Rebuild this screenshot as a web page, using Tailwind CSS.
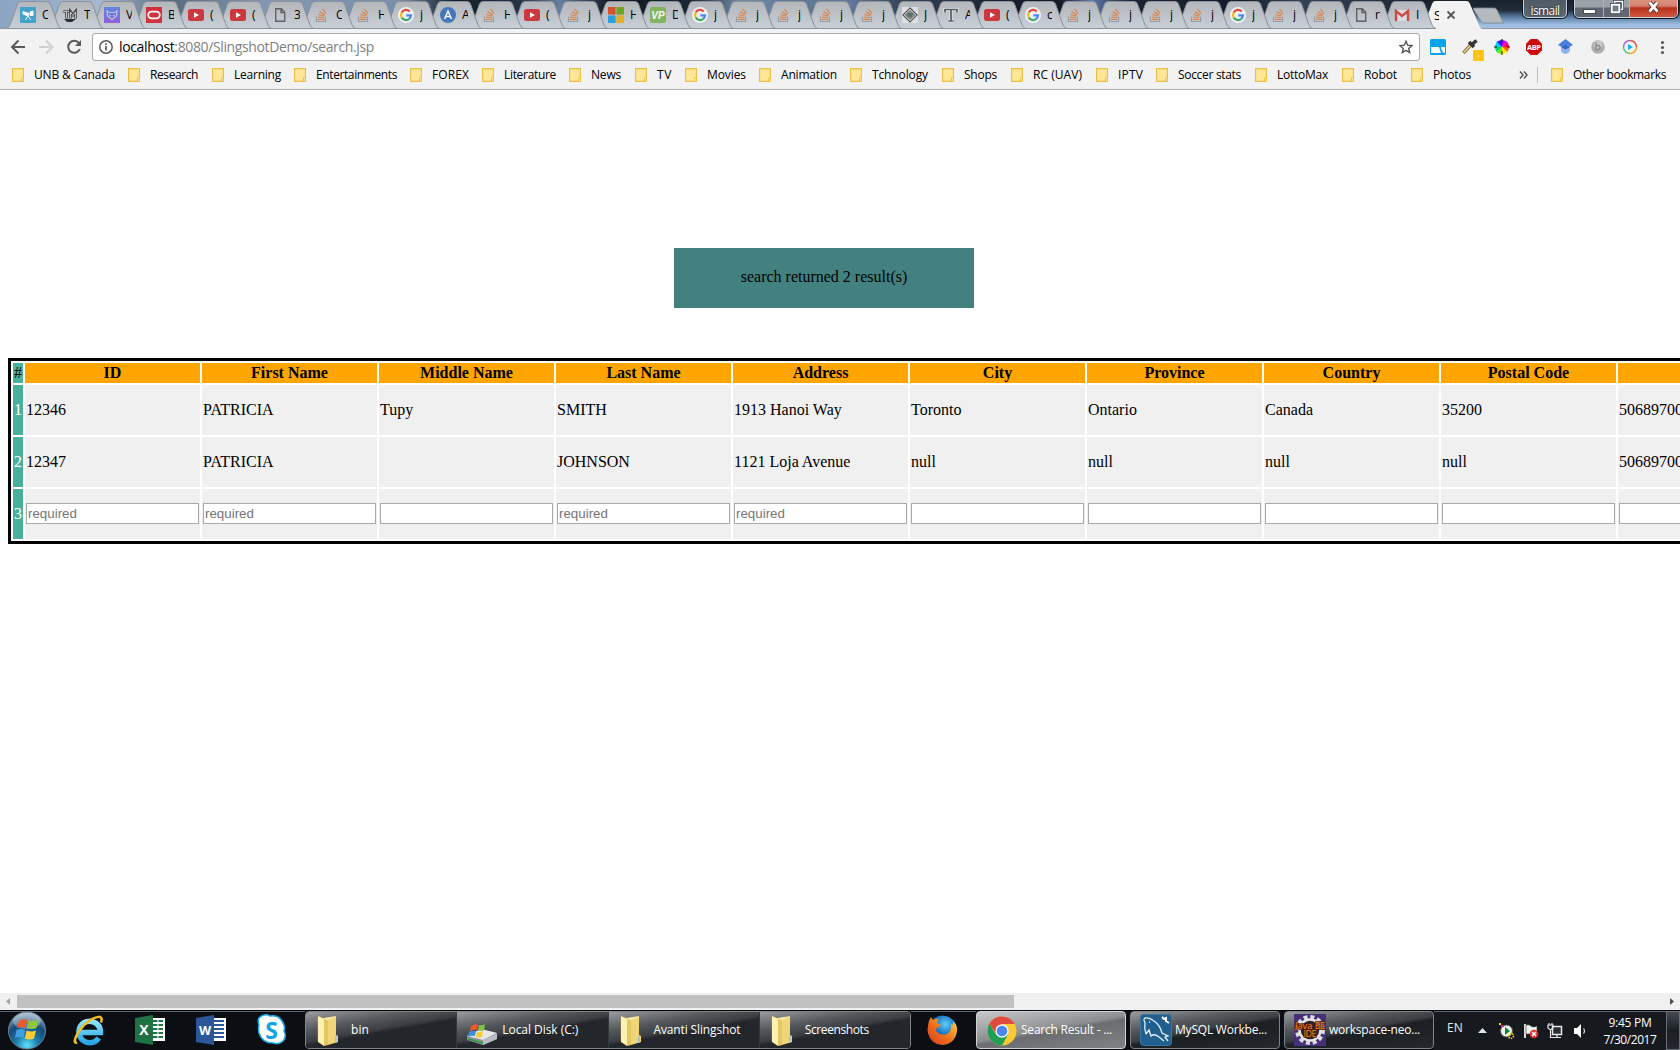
<!DOCTYPE html>
<html lang="en">
<head>
<meta charset="utf-8">
<title>Search Result</title>
<script src="https://cdn.jsdelivr.net/npm/@tailwindcss/browser@4"></script>
</head>
<body class="w-[1680px] h-[1050px] overflow-hidden bg-white flex flex-col font-['Open_Sans',sans-serif] text-xs text-black">

<svg class="absolute w-0 h-0">
  <defs>
    <linearGradient id="tabfill" x1="0" y1="0" x2="0" y2="1"><stop offset="0" stop-color="#b3b5b9"/><stop offset="1" stop-color="#c9d0d8"/></linearGradient>
    <linearGradient id="fold" x1="0" y1="0" x2="1" y2="1"><stop offset="0" stop-color="#fff6c4"/><stop offset="1" stop-color="#e6c558"/></linearGradient>
    <linearGradient id="violet" x1="0" y1="0" x2="0" y2="1"><stop offset="0" stop-color="#5a7fe0"/><stop offset="1" stop-color="#8a58d8"/></linearGradient>
    <radialGradient id="orb" cx=".5" cy=".9" r=".9"><stop offset="0" stop-color="#5fe0f8"/><stop offset=".35" stop-color="#1878a8"/><stop offset=".65" stop-color="#174a75"/><stop offset="1" stop-color="#9db6cc"/></radialGradient>
    <radialGradient id="fox" cx=".6" cy=".3" r=".7"><stop offset="0" stop-color="#5ed0f5"/><stop offset=".5" stop-color="#1574c4"/><stop offset="1" stop-color="#0a2a66"/></radialGradient>
    <linearGradient id="flame" x1="0" y1="1" x2="1" y2="0"><stop offset="0" stop-color="#d9361c"/><stop offset=".5" stop-color="#f0761c"/><stop offset="1" stop-color="#ffe24a"/></linearGradient>
    <linearGradient id="ie" x1="0" y1="0" x2="0" y2="1"><stop offset="0" stop-color="#8fe3ff"/><stop offset="1" stop-color="#2aa5e6"/></linearGradient>
  </defs>
  <symbol id="i-scope" viewBox="0 0 16 16"><rect width="16" height="16" fill="#35a0cb"/><path d="M3 4.500l6 2-1 2.500-5-2zM10 5l3-1v4.500l-3 0zM8 9l-2.500 4M8 9l3 4" fill="#fff" stroke="#fff"/></symbol>
  <symbol id="i-tm" viewBox="0 0 16 16"><path d="M1.500 4.500h6M4.500 4.500v7M8.500 11.500V4.500l2.500 3.500L13.500 4.500v7" fill="none" stroke="#333" stroke-width="2.600"/><path d="M2 4.500h5M4.500 5v6M8.500 11V5l2.500 3.500L13.500 5v6" fill="none" stroke="#fff" stroke-width=".7"/><path d="M2 12h12l-4 3H5z" fill="#222"/></symbol>
  <symbol id="i-mask" viewBox="0 0 16 16"><rect width="16" height="16" fill="url(#violet)"/><path d="M3 4l2.500 1.500h5L13 4l-.5 5L8 12.500 3.500 9z" fill="none" stroke="#b9c5f2" stroke-width="1.200"/><path d="M5 8l2 1M11 8L9 9" stroke="#b9c5f2"/></symbol>
  <symbol id="i-oracle" viewBox="0 0 16 16"><rect width="16" height="16" fill="#d5232e"/><rect x="2.200" y="4.700" width="11.600" height="6.600" rx="3.300" fill="none" stroke="#fff" stroke-width="1.700"/></symbol>
  <symbol id="i-yt" viewBox="0 0 16 16"><rect y="2" width="16" height="12" rx="2.500" fill="#cf2a31"/><path d="M6 5.300l5 2.700-5 2.700z" fill="#fff"/></symbol>
  <symbol id="i-file" viewBox="0 0 16 16"><path d="M3.700 1.700h5.600l3.400 3.600v9H3.700zM9 2v3.500h3.500" fill="none" stroke="#55585d" stroke-width="1.400"/></symbol>
  <symbol id="i-so" viewBox="0 0 16 16"><path d="M2.500 9.500v5h9v-5" fill="none" stroke="#8f9aa8" stroke-width="1.200"/><path d="M4 12.300h6.200M4 10l6.200.5M4.300 7.500l6.200 1.500M5.700 4.700l5.400 3M8.500 2l3.500 4.500" stroke="#e07a35" stroke-width="1.200"/></symbol>
  <symbol id="i-g" viewBox="0 0 16 16"><circle cx="8" cy="8" r="8" fill="#f5f7f9"/><g fill="none" stroke-width="2.300"><path d="M11.700 4.500A5 5 0 0 0 3.700 5.500" stroke="#ea4335"/><path d="M3.700 5.500a5 5 0 0 0 0 5" stroke="#fbbc05"/><path d="M3.700 10.500a5 5 0 0 0 7.500 1.400" stroke="#34a853"/><path d="M11.200 11.900A5 5 0 0 0 13 8.300H8.300" stroke="#4285f4"/></g></symbol>
  <symbol id="i-a" viewBox="0 0 16 16"><circle cx="8" cy="8" r="8" fill="#3a70b8"/><path d="M4.500 12L8 4l3.500 8M5.500 9.500h5" fill="none" stroke="#fff" stroke-width="1.400"/></symbol>
  <symbol id="i-ms" viewBox="0 0 16 16"><path fill="#d8481f" d="M0 0h7.600v7.600H0z"/><path fill="#6ba10f" d="M8.400 0H16v7.600H8.400z"/><path fill="#1a9be0" d="M0 8.400h7.600V16H0z"/><path fill="#e5ae18" d="M8.400 8.400H16V16H8.400z"/></symbol>
  <symbol id="i-vp" viewBox="0 0 16 16"><rect width="16" height="16" rx="2" fill="#7cb254"/><text x="8" y="11.500" font-size="10" font-style="italic" font-weight="700" fill="#fff" text-anchor="middle" font-family="Liberation Sans">VP</text></symbol>
  <symbol id="i-dia" viewBox="0 0 16 16"><rect width="16" height="16" fill="#dfe3e5"/><path d="M8 1l7 7-7 7-7-7z" fill="#fff" stroke="#444" stroke-width="1.200"/><path d="M8 3.500l4.500 4.500L8 12.500 3.500 8z" fill="#7d9b8c" stroke="#444"/><path d="M5 7h6M6 9h4" stroke="#333"/></symbol>
  <symbol id="i-t" viewBox="0 0 16 16"><path d="M2 5.500V2.500h12v3M8 2.500v11M5.500 14h5" fill="none" stroke="#eceef0" stroke-width="3.200"/><path d="M2 5.500V2.500h12v3M8 2.500v11M5.500 14h5" fill="none" stroke="#4a5058" stroke-width="1.700"/></symbol>
  <symbol id="i-gmail" viewBox="0 0 16 16"><rect x="1" y="3" width="14" height="11" fill="#dfe2e6"/><path d="M2 14V4l6 5 6-5v10" fill="none" stroke="#d23c31" stroke-width="2.400"/></symbol>
  <symbol id="i-bm" viewBox="0 0 12 14"><path d="M.6.6h10.800v12.800H.6z" fill="#ffe796" stroke="#e9c04a" stroke-width="1.200"/><path d="M9.500 13.400v-3.600h2v3.600z" fill="#fff0b5" stroke="#e9c04a"/></symbol>
  <symbol id="i-folder" viewBox="0 0 23 32"><path d="M2 2l9 2v26l-9-4z" fill="#f5e08b" stroke="#c7a640" stroke-width=".5"/><path d="M8 3l12-2v20l-9 2z" fill="url(#fold)"/><path d="M2 1l6 3v27l-6-4z" fill="#fff2b0"/><path d="M8 4l4 1v25l-4 1z" fill="#e5c665"/><path d="M12 5l8-2v17l2 1v6l-10 3z" fill="#f0d578"/><path d="M20 21v7" stroke="#9bd" stroke-width="1.500"/></symbol>
</svg>

<!-- window frame and tab strip -->
<header class="relative h-[29px] shrink-0 flex overflow-hidden bg-[linear-gradient(90deg,#8aa4c2_0,#a5b8ce_100px,#596a7e_170px,#8298b2_260px,#7890ad_400px,#141c26_455px,#273444_520px,#64809f_560px,#12161d_610px,#1c2632_690px,#7189a5_740px,#5e7894_800px,#60799a_850px,#37465a_900px,#18202c_1000px,#141a24_1060px,#617cb0_1090px,#1b2530_1130px,#141c28_1240px,#33445a_1300px,#202a36_1400px,#161d27_1500px,#39424e_1680px)]">
  <div class="absolute left-[1420px] top-0 w-[260px] h-[29px] bg-[linear-gradient(180deg,#19212b_0,#202c39_35%,#5d80a6_60%,#9dbde0_85%,#a9c8e6_100%)]"></div>
  <div id="tabs" class="relative flex pl-[6px]"></div>
  <div class="absolute left-0 top-7 w-full h-px bg-[#8e959e]"></div>
  <svg class="absolute left-[1418px] top-0" width="90" height="29"><path d="M1 29Q5 28 6 25L14 4Q15 1 17 1h32q2 0 3 3l9 21q1 4 4 4z" fill="#f2f2f2"/><path d="M29.500 11.500l7 7m0-7l-7 7" stroke="#555" stroke-width="1.800"/><path d="M56 8h20q2 0 3 2l6.500 13H66q-2 0-3-2L55.500 9.500Q55 8 56 8z" fill="#b5babf" stroke="#7f8893" stroke-width=".8"/></svg>
  <span class="absolute left-[1434px] top-[6px] text-[13px] leading-[18px] w-[5px] overflow-hidden">S</span>
  <div class="absolute left-[1523px] -top-1 w-[44px] h-[22px] rounded-[5px] border border-[#c9d3dd] ring-1 ring-[#10161d] bg-linear-to-b from-[#4d5761] to-[#5b6875] text-white text-[12px] leading-[23px] flex justify-center pt-[2px] [text-shadow:0_0_2px_#000]"><span data-w="28" class="whitespace-nowrap">ismail</span></div>
  <div class="absolute left-[1574px] -top-1 w-[104px] h-[22px] rounded-[5px] border border-[#c9d3dd] ring-1 ring-[#10161d] flex overflow-hidden">
    <div class="w-[29px] border-r border-[#aab4be] bg-linear-to-b from-[#9ba1a8] from-50% to-[#5f6872] to-55% flex justify-center items-end pb-[3px]"><div class="w-[13px] h-[5px] bg-white border border-[#444c55]"></div></div>
    <div class="w-[26px] border-r border-[#aab4be] bg-linear-to-b from-[#9ba1a8] from-50% to-[#5f6872] to-55% flex justify-center items-end pb-[3px]"><svg width="14" height="14"><path d="M4.500 1.500h8v8h-8z" fill="none" stroke="#333c46" stroke-width="3"/><path d="M4.500 1.500h8v8h-8z" fill="none" stroke="#fff" stroke-width="1.500"/><path d="M1.500 4.500h8v8h-8z" fill="#737b84" stroke="#333c46" stroke-width="3"/><path d="M1.700 4.700h7.600v7.600H1.700z" fill="none" stroke="#fff" stroke-width="2"/></svg></div>
    <div class="flex-1 bg-[linear-gradient(180deg,#df9888_0,#d7816f_45%,#b8311b_55%,#cf5a42_100%)] flex justify-center items-end pb-[4px]"><svg width="14" height="12"><path d="M2.500 1.500l8 9m0-9l-8 9" stroke="#54302c" stroke-width="4.500"/><path d="M2.500 1.500l8 9m0-9l-8 9" stroke="#fff" stroke-width="2.700"/></svg></div>
  </div>
</header>

<!-- toolbar -->
<div class="h-[33px] shrink-0 bg-[#f2f2f2] flex items-start pt-1">
  <svg width="92" height="28" viewBox="0 0 92 28" fill="none" stroke-width="2"><path d="M25 14H12.500M18.500 7.500L12 14l6.500 6.500" stroke="#5a5a5a"/><path d="M39 14h12.500M46 7.500l6.500 6.500-6.500 6.500" stroke="#d0d0d0"/><path d="M79 10.200A6 6 0 1 0 79.800 16" stroke="#5a5a5a"/><path d="M81 7v6h-6z" fill="#5a5a5a"/></svg>
  <div class="w-[1328px] h-7 rounded-[3px] border border-[#a8a8a8] bg-white flex items-center">
    <svg class="ml-[6px]" width="14" height="14" viewBox="0 0 14 14"><circle cx="7" cy="7" r="6.200" fill="none" stroke="#5a5a5a" stroke-width="1.500"/><path d="M7 6v4.500M7 3.200v1.700" stroke="#5a5a5a" stroke-width="1.700"/></svg>
    <div class="ml-[6px] text-[14px] leading-[26px] whitespace-nowrap text-[#808080]"><span data-w="254"><span class="text-black">localhost</span>:8080/SlingshotDemo/search.jsp</span></div>
    <svg class="ml-auto mr-[6px]" width="14" height="14" viewBox="0 0 14 14"><path d="M7 1.200l1.700 4 4.300.4-3.300 2.800 1 4.200L7 10.400l-3.700 2.200 1-4.200L1 5.600l4.300-.4z" fill="none" stroke="#555" stroke-width="1.400"/></svg>
  </div>
  <svg width="260" height="29" viewBox="1420 33 260 29">
    <rect x="1430" y="39" width="16" height="16" rx="1.500" fill="#06a4ea"/><path d="M1431 47h8l2 6h-10zM1441 47h4v6q-3 0-4-6z" fill="#fff"/>
    <path d="M1463.500 53l8-9" stroke="#8f7a45" stroke-width="3.500"/><path d="M1464 52.500l8-9" stroke="#e5cf8e" stroke-width="1.500"/><path d="M1469 42l5 5M1472 44.500l4.500-4" stroke="#333" stroke-width="3.500"/><rect x="1473" y="50" width="11" height="11" rx="1" fill="#fdc411"/><path d="M1478 56h1" stroke="#fff"/>
    <g transform="translate(1502 47)"><path d="M0 0V-7.500L5.300-5.300z" fill="#c0f"/><path d="M0 0L5.300-5.300 7.500 0z" fill="#f06"/><path d="M0 0h7.500L5.300 5.300z" fill="#f60"/><path d="M0 0l5.300 5.300L0 7.500z" fill="#fe0"/><path d="M0 0v7.500L-5.300 5.300z" fill="#6e0"/><path d="M0 0l-5.300 5.300L-7.500 0z" fill="#0d6"/><path d="M0 0h-7.500l2.200-5.300z" fill="#0cf"/><path d="M0 0l-5.300-5.300L0-7.500z" fill="#22f"/><path d="M0-8v4M0 8V4M8 0H5M-8 0h3" stroke="#222"/></g>
    <path d="M1530.700 39h6.600l4.700 4.700v6.600l-4.700 4.700h-6.600l-4.700-4.700v-6.600z" fill="#cf0a0a"/><text x="1534" y="50" text-anchor="middle" font-size="7.500" font-weight="700" textLength="14" fill="#fff" font-family="Open Sans">ABP</text>
    <path d="M1565.500 39l7.500 6-7.500 4-7.500-4z" fill="#4a7fdd"/><path d="M1561 46.500h9v4q-1 3-4.500 3.500-4-.5-4.500-3.500z" fill="#8fb2ef"/><path d="M1561 47l4.500 2.500 4.500-2.500-4.500-2z" fill="#3469cc"/>
    <circle cx="1598" cy="47" r="6.800" fill="#adadad"/><circle cx="1598" cy="44.500" r="4.500" fill="#c9c9c9"/><path d="M1596 42.500v7h2a2 2 0 0 0 0-4h-2" stroke="#8d8d8d" stroke-width="1.500" fill="none"/>
    <g fill="none" stroke-width="1.500"><path d="M1630 40.500a6.500 6.500 0 0 1 6.500 6.500" stroke="#e5534a"/><path d="M1636.500 47a6.500 6.500 0 0 1-6.500 6.500" stroke="#f3a72b"/><path d="M1630 53.500a6.500 6.500 0 0 1-6.500-6.500" stroke="#60c98a"/><path d="M1623.500 47a6.500 6.500 0 0 1 6.500-6.500" stroke="#b067d8"/></g><path d="M1628 44l5 3-5 3z" fill="#12b5ea"/>
    <g fill="#5a5a5a"><circle cx="1662.500" cy="42.500" r="1.600"/><circle cx="1662.500" cy="47.500" r="1.600"/><circle cx="1662.500" cy="52.500" r="1.600"/></g>
  </svg>
</div>

<!-- bookmarks bar -->
<div class="h-7 shrink-0 bg-[#f2f2f2] border-b border-[#b6b6b6] flex items-center pl-3 pb-px">
  <div id="bookmarks" class="flex"></div>
  <svg class="ml-[21px]" width="10" height="10" viewBox="0 0 10 10"><path d="M1 1.500l3 3.500-3 3.500M5 1.500L8 5 5 8.500" fill="none" stroke="#555" stroke-width="1.500"/></svg>
  <div class="ml-2 w-px h-4 bg-[#bdbdbd]"></div>
  <div class="ml-[13px] flex items-center gap-[10px]"><svg width="12" height="14"><use href="#i-bm"/></svg><span data-w="92" class="whitespace-nowrap">Other bookmarks</span></div>
</div>

<!-- page -->
<main class="h-[903px] shrink-0 overflow-hidden bg-white font-['Liberation_Serif',serif] text-base leading-[18px] pl-2 pt-[158px]">
  <div class="ml-[666px] w-[300px] h-[60px] bg-[#438080] flex items-center justify-center pb-0.5">search returned 2 result(s)</div>
  <div id="grid" class="mt-[50px] w-max border-[3px] border-black p-0.5 grid grid-cols-[10px_repeat(10,175px)] grid-rows-[20px_50px_50px_50px] gap-0.5"></div>
</main>

<!-- horizontal scroll bar -->
<div class="h-[17px] shrink-0 bg-[#f0f0f0] flex items-center">
  <svg width="17" height="17"><path d="M10 5v7L6 8.500z" fill="#a3a3a3"/></svg>
  <div class="w-[997px] h-[13px] bg-[#c1c1c1]"></div>
  <svg class="ml-auto" width="17" height="17"><path d="M7 5v7l4-3.500z" fill="#505050"/></svg>
</div>

<!-- taskbar -->
<footer class="h-10 shrink-0 border-t border-[#05080a] bg-[#0b0f14] flex text-white relative">
  <svg class="shrink-0" width="305" height="39" viewBox="0 1011 305 39">
    <path d="M0 1011.500h305" stroke="#59646c"/>
    <circle cx="27" cy="1030.500" r="18.500" fill="url(#orb)" stroke="#6d8496"/>
    <ellipse cx="27" cy="1021" rx="14" ry="8" fill="#fff" opacity=".3"/>
    <path d="M19 1021q4-3 8-1l-1.500 8q-4-2-8.500 0z" fill="#f0592b"/><path d="M28.500 1020q4 2 10-.5l-2 8.500q-5 2-9.500 0z" fill="#8cc63e"/><path d="M16.500 1030q4-2 8.500 0l-1.500 8q-4-2-8.500 0z" fill="#3f9fe0"/><path d="M26.500 1030.500q5 2 9.500 0l-2 8q-4 2-9 0z" fill="#ffcb33"/>
    <path d="M80 1032.500h20.500a10.800 10.800 0 1 0-1.800 5.500" fill="none" stroke="url(#ie)" stroke-width="5.500"/>
    <path d="M77 1042.500c-6 2 1-13 10-20s17-8 14 0" fill="none" stroke="#f4bd1c" stroke-width="2.500"/>
    <path d="M151 1018h14v23h-14z" fill="#fff"/><path d="M153 1021h10m-10 4h10m-10 4h10m-10 4h10m-10 4h10" stroke="#1f7244" stroke-width="2"/><path d="M158 1019v20" stroke="#fff"/><path d="M135 1018l18-3v30l-18-3z" fill="#1f7244"/><text x="144" y="1035" text-anchor="middle" font-size="14" font-weight="700" fill="#fff" font-family="Open Sans">X</text>
    <path d="M212 1018h14v23h-14z" fill="#fff"/><path d="M214 1021h10m-10 4h10m-10 4h10m-10 4h10m-10 4h10" stroke="#2b579a" stroke-width="1.800"/><path d="M196 1018l18-3v30l-18-3z" fill="#2b579a"/><text x="205" y="1035" text-anchor="middle" font-size="12.500" font-weight="700" fill="#fff" font-family="Open Sans">W</text>
    <g fill="#fff" stroke="#16a8e6" stroke-width="1.500"><path d="M259 1025q-3-8 5-10 4-1 6 1 10-2 14 9 1 3 0 6 3 6-1 10-4 4-10 2-11 0-14-10-1-4 0-8z"/></g><text x="271.500" y="1038.500" text-anchor="middle" font-size="23" font-weight="700" fill="#0aa5e6" font-family="Open Sans">S</text>
  </svg>
  <div class="w-[606px] h-[38px] shrink-0 rounded-sm border border-[#7d8287] flex overflow-hidden" id="explorer"></div>
  <svg class="shrink-0" width="65" height="39" viewBox="911 1011 65 39"><path d="M911 1011.500h65" stroke="#59646c"/><circle cx="942.500" cy="1030" r="14.500" fill="url(#fox)"/><path d="M928 1026q0-5 3-9l2 3q3-2 6-1-2 2-2 4l4 2q-1 2-4 3-2 2 0 4 4 4 10 2 5-3 4-10 3 2 2-3 5 5 4 10-2 13-14.500 14-12-1-14.500-12-1-3 0-7z" fill="url(#flame)"/></svg>
  <div id="windows" class="flex gap-1 shrink-0"></div>
  <div class="flex-1 relative border-t border-[#59646c] flex bg-[#16191e]">
    <span class="ml-[13px] mt-[6px] w-[15px] leading-[20px] text-[12px] text-[#e8e8e8]"><span data-w="15">EN</span></span>
    <svg class="shrink-0 ml-[9px]" width="115" height="38" viewBox="1471 1012 115 38">
      <path d="M1478 1033l4.500-5 4.500 5z" fill="#dce6f2"/>
      <circle cx="1506.500" cy="1031" r="6" fill="#f0f4f0" stroke="#555"/><path d="M1505 1027l5 4-5 4z" fill="#12852a"/><path d="M1501 1025h3v2h-3z" fill="#e020a0"/><path d="M1499 1023h2v2h-2z" fill="#f0e020"/><circle cx="1511" cy="1036" r="2.500" fill="none" stroke="#e8d820" stroke-width="1.500" stroke-dasharray="1.500 1"/>
      <path d="M1524 1024h2v14h-2z" fill="#ddd"/><path d="M1526 1025q3-1 5 1t6 0v8h-11z" fill="#eee" stroke="#222" stroke-width=".5"/><circle cx="1534" cy="1034" r="4.300" fill="#df2c2c"/><path d="M1532 1032l4 4m0-4l-4 4" stroke="#fff" stroke-width="1.500"/>
      <path d="M1552.500 1026.500h9v8h-9z" fill="#2a2e34" stroke="#e8e8e8" stroke-width="1.500"/><path d="M1548 1025h5v3l-2.500 2-2.500-2zM1549 1023v2m3-2v2M1550.500 1030v7.500H1561M1557 1035v2" fill="none" stroke="#e8e8e8" stroke-width="1.200"/>
      <path d="M1574 1028h3l4-4v14l-4-4h-3z" fill="#fff"/><path d="M1583.500 1028.500q2 2.500 0 5" fill="none" stroke="#ddd" stroke-width="1.200"/>
    </svg>
    <div class="absolute right-[13px] top-[2px] w-[74px] text-center text-[12px] leading-[17px] whitespace-nowrap"><div><span data-w="42">9:45 PM</span></div><div><span data-w="52">7/30/2017</span></div></div>
    <div class="absolute right-0 -top-px w-[14px] h-[39px] border border-[#6a6f76] bg-linear-to-b from-[#454a51] via-[#1c2025] to-[#23272d]"></div>
  </div>
</footer>

<script>
const tabs = [['scope','C'],['tm','T'],['mask','V'],['oracle','B'],['yt','('],['yt','('],['file','3'],['so','C'],['so','H'],['g','j'],['a','A'],['so','H'],['yt','('],['so','j'],['ms','H'],['vp','D'],['g','j'],['so','j'],['so','j'],['so','j'],['so','j'],['dia','J'],['t','A'],['yt','('],['g','c'],['so','j'],['so','j'],['so','j'],['so','j'],['g','j'],['so','j'],['so','j'],['file','r'],['gmail','I']];
document.getElementById('tabs').innerHTML = tabs.map(([ic, t], i) => `
  <div class="relative h-[29px] shrink-0" style="width:${i < 21 ? 42 : 41}px;z-index:${40 - i}">
    <svg class="absolute left-0 top-0" width="57" height="29"><path d="M0 28.500Q3 28 4 25L11.500 4Q12.500 1.500 15 1.500h26q2.500 0 3.500 2.500L52 25q1 3 4 3.500z" fill="url(#tabfill)" stroke="#8a929c"/></svg>
    <div class="relative flex pl-[14px] pt-[7px] gap-[6px]"><svg class="shrink-0 opacity-90" width="16" height="16"><use href="#i-${ic}"/></svg><span class="block w-[6px] overflow-hidden text-[12px] leading-4">${t}</span></div>
  </div>`).join('');

// [label, text width, slot width]
const marks = [['UNB & Canada',80,116],['Research',47,84],['Learning',46,82],['Entertainments',80,116],['FOREX',36,72],['Literature',51,87],['News',29,66],['TV',14,50],['Movies',38,74],['Animation',55,91],['Tchnology',55,92],['Shops',32,69],['RC (UAV)',48,85],['IPTV',24,60],['Soccer stats',62,99],['LottoMax',50,87],['Robot',32,69],['Photos',37,87]];
document.getElementById('bookmarks').innerHTML = marks.map(([t, w, s]) => `
  <div class="flex items-center gap-[10px] shrink-0" style="width:${s}px"><svg class="shrink-0" width="12" height="14"><use href="#i-bm"/></svg><span data-w="${w}" class="whitespace-nowrap">${t.replace('&','&amp;')}</span></div>`).join('');

const heads = ['ID','First Name','Middle Name','Last Name','Address','City','Province','Country','Postal Code',''];
const rows = [['12346','PATRICIA','Tupy','SMITH','1913 Hanoi Way','Toronto','Ontario','Canada','35200','5068970000'],['12347','PATRICIA','','JOHNSON','1121 Loja Avenue','null','null','null','null','5068970000']];
const req = [1,1,0,1,1,0,0,0,0,0];
let g = '<div class="bg-[#48b09b] flex items-center justify-center">#</div>' + heads.map(h => `<div class="bg-[#ffa500] font-bold text-center leading-5">${h}</div>`).join('');
rows.forEach((r, i) => { g += `<div class="bg-[#48b09b] text-white flex items-center justify-center">${i + 1}</div>` + r.map(c => `<div class="bg-[#f0f0f0] px-px flex items-center">${c}</div>`).join(''); });
g += '<div class="bg-[#48b09b] text-white flex items-center justify-center">3</div>' + req.map(q => `<div class="bg-[#f0f0f0] px-px pb-px flex items-center"><div class="w-full h-[21px] border border-[#a9a9a9] bg-white px-px font-['Liberation_Sans',sans-serif] text-[13.333px] leading-[19px] text-[#757575]">${q ? 'required' : ''}</div></div>`).join('');
document.getElementById('grid').innerHTML = g;

const folder = '<svg class="absolute left-[10px] top-[3px]" width="23" height="32"><use href="#i-folder"/></svg>';
const disk = '<svg class="absolute left-[9px] top-[10px]" width="32" height="24" viewBox="0 0 32 24"><path d="M1 14l14-7 16 4v6l-14 6L1 18z" fill="#8d9296"/><path d="M1 14l14-7 16 4-14 7z" fill="#e4e6e8"/><path d="M17 18l14-6v5l-14 6z" fill="#b8bcc0"/><path d="M2 17l15 4" stroke="#2a9a38" stroke-width="1.500"/><path d="M5 4q4-3 7-1l-1 5q-3-1-7 1z" fill="#ee5a28"/><path d="M13 3q3 1 6-1l-1 6q-3 2-6 0z" fill="#85c440"/><path d="M3 10q4-2 7-1l-1 5q-3-1-7 1z" fill="#3c90e0"/><path d="M11 10q3 1 6-1l-1 6q-3 1-6 0z" fill="#fcc92e"/></svg>';
document.getElementById('explorer').innerHTML = [['bin',17,folder],['Local Disk (C:)',75,disk],['Avanti Slingshot',86,folder],['Screenshots',63,folder]].map(([t, w, ic]) => `
  <div class="relative flex-1 border-r border-[#33383d] last:border-r-0 overflow-hidden bg-[linear-gradient(170deg,#9a9c9e_0%,#55585c_30%,#3b3e42_48%,#23272b_54%,#23272b_100%)]">${ic}<span data-w="${w}" class="absolute left-[45px] top-[10px] leading-4 whitespace-nowrap">${t}</span></div>`).join('');

const chrome = '<svg class="absolute left-[10px] top-[4px]" width="30" height="30" viewBox="-15 -15 30 30"><circle r="14.500" fill="#fbc934"/><path d="M0-7H12.700A14.500 14.500 0 0 0-12.500-7.300L-6 3z" fill="#e04a3f"/><path d="M-12.600-7.200A14.500 14.500 0 0 0 0 14.500L6 3.500-6 3.500z" fill="#1e9e58"/><circle r="6.700" fill="#f5f5f5"/><circle r="5.300" fill="#4a87ee"/></svg>';
const mysql = '<svg class="absolute left-[9px] top-[2px]" width="32" height="32" viewBox="0 0 32 32"><rect x=".5" y=".5" width="31" height="31" rx="3" fill="#215f8e" stroke="#3878a5"/><path d="M6 20Q4 14 5 9q-2-4 0-5 4-1 9 3 6 4 8 12l6 3-3 1 3 4M6 20l3-4 2 6q3-3 8 1l5 4M9 8h1" fill="none" stroke="#e5eff6" stroke-width="1.300"/><path d="M22 3l2 2 2-1 0 3 3 2" fill="none" stroke="#fff" stroke-width="2"/></svg>';
const eclipse = '<svg class="absolute left-[9px] top-[2px]" width="32" height="32" viewBox="0 0 32 32"><rect width="32" height="32" fill="#46307a"/><circle cx="16" cy="16" r="13" fill="none" stroke="#ddd" stroke-width="4" stroke-dasharray="4 2.800"/><circle cx="16" cy="16" r="10.500" fill="#282334" stroke="#e5e5e5" stroke-width="2.500"/><g fill="#ff8420" stroke="#502000" stroke-width="1.500" paint-order="stroke" font-family="Open Sans" font-size="9" text-anchor="middle"><text x="16" y="15" textLength="30" lengthAdjust="spacingAndGlyphs">Java EE</text><text x="16" y="23" textLength="13">IDE</text></g></svg>';
document.getElementById('windows').innerHTML = [['Search Result - ...',90,chrome,1],['MySQL Workbe...',91,mysql,0],['workspace-neo...',90,eclipse,0]].map(([t, w, ic, on]) => `
  <div class="relative w-[150px] h-[38px] rounded-sm border overflow-hidden ${on ? 'border-[#d0d3d6] bg-[linear-gradient(170deg,#c5c7c9_0%,#9c9ea0_35%,#8a8c8e_48%,#6b6e71_54%,#808386_100%)]' : 'border-[#7d8287] bg-[linear-gradient(170deg,#9a9c9e_0%,#55585c_30%,#3b3e42_48%,#1c2023_54%,#24282c_100%)]'}">${ic}<span data-w="${w}" class="absolute left-[44px] top-[10px] leading-4 whitespace-nowrap">${t}</span></div>`).join('');

// tighten or open letter spacing so each label fills its intended width
function fit() {
  document.querySelectorAll('[data-w]').forEach(e => {
    e.style.letterSpacing = '0px';
    const n = e.textContent.length, w = e.getBoundingClientRect().width;
    e.style.letterSpacing = ((+e.dataset.w + 1 - w) / n).toFixed(3) + 'px';
  });
}
fit();
addEventListener('load', () => { fit(); requestAnimationFrame(fit); setTimeout(fit, 50); });
</script>
</body>
</html>
